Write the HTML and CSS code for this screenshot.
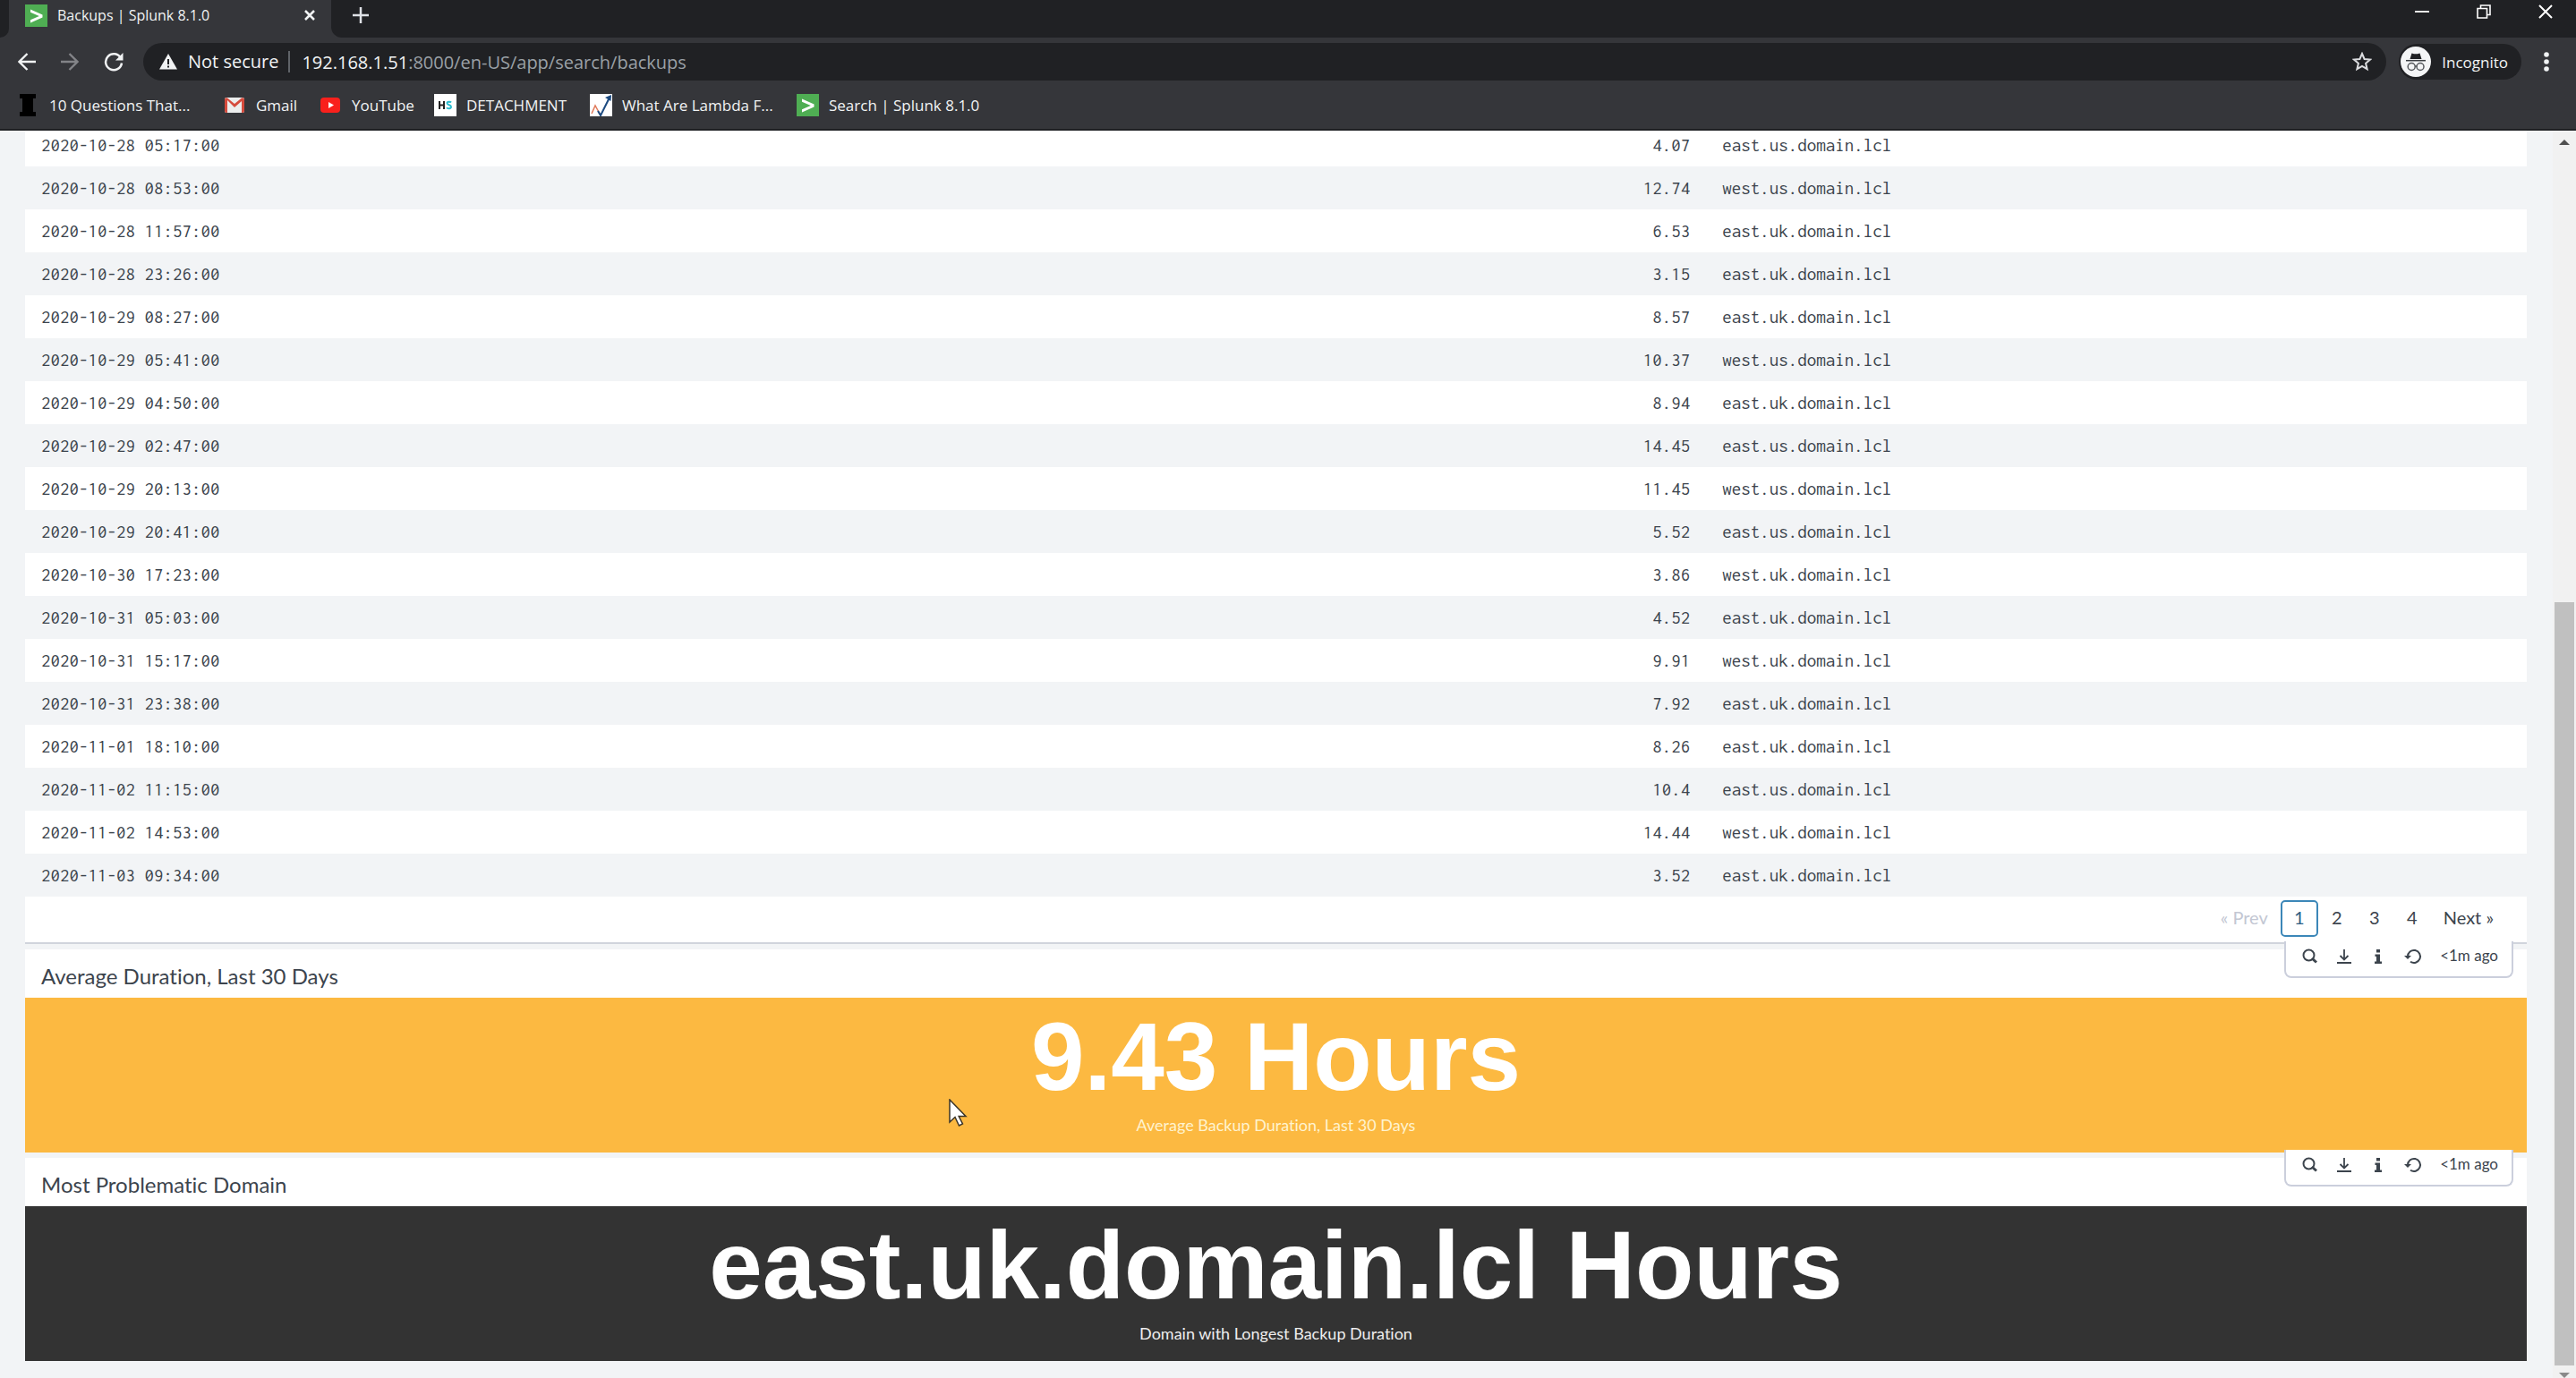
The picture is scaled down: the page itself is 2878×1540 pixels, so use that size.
FILE: index.html
```html
<!DOCTYPE html>
<html lang="en">
<head>
<meta charset="utf-8">
<title>Backups | Splunk 8.1.0</title>
<link rel="stylesheet" href="styles.css">
</head>
<body>
<svg class="defs" aria-hidden="true">
  <symbol id="splunk" viewBox="0 0 25 25"><path fill="#4fae53" d="M0 0h25v25H0z"/><path fill="#fff" d="M6 5.500 19.500 11.500v3L6 20.500v-3.300l9.800-4.200L6 8.800z"/></symbol>
  <symbol id="search" viewBox="0 0 18 18"><circle cx="7.500" cy="7.500" r="6" fill="none" stroke="currentColor" stroke-width="2"/><path d="m11 11 5 4.500" fill="none" stroke="currentColor" stroke-width="3"/></symbol>
  <symbol id="download" viewBox="0 0 18 18"><path d="M9 1v11M4.500 8 9 12.500 13.500 8M1 16h16" fill="none" stroke="currentColor" stroke-width="1.800"/></symbol>
  <symbol id="info" viewBox="0 0 18 18"><path fill="currentColor" d="M7 1h4v3.500H7zM5.500 6.500H11v8h2V17H5v-2.500h2V9H5.500z"/></symbol>
  <symbol id="refresh" viewBox="0 0 20 18"><path d="M4 9a7 7 0 1 1 3 5.700" fill="none" stroke="currentColor" stroke-width="2"/><path d="M0 8h8L4 12z" fill="currentColor"/></symbol>
</svg>

<header class="browser">
  <div class="tabs">
    <div class="tab-edge"></div>
    <div class="tab">
      <svg class="favicon"><use href="#splunk"/></svg>
      <span class="tab-title">Backups | Splunk 8.1.0</span>
      <button class="plain" aria-label="Close tab"><svg width="14" height="14" viewBox="0 0 14 14"><path d="m2 2 10 10M12 2 2 12" stroke="#f1f3f4" stroke-width="2.500"/></svg></button>
    </div>
    <div class="strip">
      <button class="plain" aria-label="New tab"><svg width="18" height="18" viewBox="0 0 18 18"><path d="M9 0v18M0 9h18" stroke="#dee1e6" stroke-width="2.500"/></svg></button>
      <div class="window-controls">
        <button class="plain" aria-label="Minimize"><svg width="16" height="16" viewBox="0 0 16 16"><path d="M0 8h16" stroke="#e8e8e8" stroke-width="2"/></svg></button>
        <button class="plain" aria-label="Restore"><svg width="16" height="16" viewBox="0 0 16 16"><path d="M1 4.500h10.500V15H1zM4.500 4.500V1H15v10.500h-3.500" fill="none" stroke="#fff" stroke-width="1.600"/></svg></button>
        <button class="plain" aria-label="Close"><svg width="16" height="16" viewBox="0 0 16 16"><path d="m1 1 14 14M15 1 1 15" stroke="#fff" stroke-width="2"/></svg></button>
      </div>
    </div>
  </div>

  <div class="toolbar">
    <div class="nav">
      <button class="plain" aria-label="Back"><svg width="20" height="20" viewBox="0 0 20 20"><path d="M20 10H2M10.500 1 1.500 10l9 9" fill="none" stroke="#f1f3f4" stroke-width="2.300"/></svg></button>
      <button class="plain" aria-label="Forward"><svg width="20" height="20" viewBox="0 0 20 20"><path d="M0 10h18M9.500 1l9 9-9 9" fill="none" stroke="#838488" stroke-width="2.300"/></svg></button>
      <button class="plain" aria-label="Reload"><svg width="22" height="22" viewBox="0 0 22 22"><path d="M19 7A9 9 0 1 0 20 12.500" fill="none" stroke="#f1f3f4" stroke-width="2.500"/><path d="M21.500 1v8.500H13z" fill="#f1f3f4"/></svg></button>
    </div>
    <div class="omnibox">
      <svg width="20" height="18" viewBox="0 0 20 18"><path d="M10 0 20 17.500H0z" fill="#f1f3f4"/><path d="M10 6v6M10 13.500v2" stroke="#202124" stroke-width="2"/></svg>
      <span class="secure">Not secure</span>
      <span class="url"><b>192.168.1.51</b>:8000/en-US/app/search/backups</span>
      <button class="plain" aria-label="Bookmark this page"><svg width="22" height="22" viewBox="0 0 22 22"><path d="m11 2 2.600 6 6.400.6-4.900 4.200 1.500 6.400L11 15.800l-5.600 3.400 1.500-6.400L2 8.600 8.400 8z" fill="none" stroke="#dcdde0" stroke-width="2"/></svg></button>
    </div>
    <div class="incognito">
      <svg width="34" height="34" viewBox="0 0 34 34"><circle cx="17" cy="17" r="17" fill="#f4f5f6"/><path d="m12.500 7.500 2.500.8h4l2.500-.8 2 6.500h-13z" fill="#202124"/><path d="M6 15.700h22" stroke="#3c3f43" stroke-width="1.500"/><circle cx="12.200" cy="22.500" r="4" fill="none" stroke="#55585c" stroke-width="1.500"/><circle cx="22" cy="22.500" r="4" fill="none" stroke="#55585c" stroke-width="1.500"/><path d="M16 22h2.500" stroke="#55585c" stroke-width="1.500"/></svg>
      <span>Incognito</span>
    </div>
    <button class="plain" aria-label="Menu"><svg width="6" height="22" viewBox="0 0 6 22"><g fill="#f1f3f4"><circle cx="3" cy="3" r="2.800"/><circle cx="3" cy="11" r="2.800"/><circle cx="3" cy="19" r="2.800"/></g></svg></button>
  </div>

  <nav class="bookmarks">
    <a href="#"><svg class="favicon" viewBox="0 0 25 25"><path fill="#000" d="M3 0h18v5h-3v15h3v5H3v-5h3V5H3z"/></svg>10 Questions That...</a>
    <a href="#"><svg class="favicon" viewBox="0 0 25 25"><rect x="1" y="4" width="22" height="17" rx="2" fill="#eceded"/><path d="M4 7v14H3a2 2 0 0 1-2-2V6a2 2 0 0 1 3-1.500l8 6.500 8-6.500A2 2 0 0 1 23 6v13a2 2 0 0 1-2 2h-1V8l-8 7z" fill="#d54b3d"/></svg>Gmail</a>
    <a href="#"><svg class="favicon" viewBox="0 0 25 25"><rect x="1" y="4" width="22" height="17" rx="4" fill="#f9201c"/><path d="m10 9 6 3.500-6 3.500z" fill="#fff"/></svg>YouTube</a>
    <a href="#"><svg class="favicon" viewBox="0 0 25 25"><path fill="#fff" d="M0 0h25v25H0z"/><path d="M6 8v9M11 8v9M6 12.500h5" fill="none" stroke="#222" stroke-width="2"/><path d="M19 9.500c-1-1.200-4.500-1.200-4.500.8 0 2.500 4.500 1.500 4.500 4.200 0 2-4 2.200-5 .7" fill="none" stroke="#2bbdd0" stroke-width="2"/></svg>DETACHMENT</a>
    <a href="#"><svg class="favicon" viewBox="0 0 25 25"><path fill="#fff" d="M0 0h25v25H0z"/><path d="m2 22 4-9 6 11" fill="none" stroke="#e0795a" stroke-width="1.500"/><path d="m9 19 3 5 10-20" fill="none" stroke="#1c4a80" stroke-width="2"/><path d="m17 4 7-3-.5 7z" fill="#1c4a80"/></svg>What Are Lambda F...</a>
    <a href="#"><svg class="favicon"><use href="#splunk"/></svg>Search | Splunk 8.1.0</a>
  </nav>
</header>

<div class="viewport">
  <main class="dashboard">
    <section class="panel">
      <table class="events">
        <colgroup><col class="time"><col class="hours"><col class="domain"></colgroup>
        <tbody>
          <tr><td>2020-10-28 05:17:00</td><td>4.07</td><td>east.us.domain.lcl</td></tr>
          <tr><td>2020-10-28 08:53:00</td><td>12.74</td><td>west.us.domain.lcl</td></tr>
          <tr><td>2020-10-28 11:57:00</td><td>6.53</td><td>east.uk.domain.lcl</td></tr>
          <tr><td>2020-10-28 23:26:00</td><td>3.15</td><td>east.uk.domain.lcl</td></tr>
          <tr><td>2020-10-29 08:27:00</td><td>8.57</td><td>east.uk.domain.lcl</td></tr>
          <tr><td>2020-10-29 05:41:00</td><td>10.37</td><td>west.us.domain.lcl</td></tr>
          <tr><td>2020-10-29 04:50:00</td><td>8.94</td><td>east.uk.domain.lcl</td></tr>
          <tr><td>2020-10-29 02:47:00</td><td>14.45</td><td>east.us.domain.lcl</td></tr>
          <tr><td>2020-10-29 20:13:00</td><td>11.45</td><td>west.us.domain.lcl</td></tr>
          <tr><td>2020-10-29 20:41:00</td><td>5.52</td><td>east.us.domain.lcl</td></tr>
          <tr><td>2020-10-30 17:23:00</td><td>3.86</td><td>west.uk.domain.lcl</td></tr>
          <tr><td>2020-10-31 05:03:00</td><td>4.52</td><td>east.uk.domain.lcl</td></tr>
          <tr><td>2020-10-31 15:17:00</td><td>9.91</td><td>west.uk.domain.lcl</td></tr>
          <tr><td>2020-10-31 23:38:00</td><td>7.92</td><td>east.uk.domain.lcl</td></tr>
          <tr><td>2020-11-01 18:10:00</td><td>8.26</td><td>east.uk.domain.lcl</td></tr>
          <tr><td>2020-11-02 11:15:00</td><td>10.4</td><td>east.us.domain.lcl</td></tr>
          <tr><td>2020-11-02 14:53:00</td><td>14.44</td><td>west.uk.domain.lcl</td></tr>
          <tr><td>2020-11-03 09:34:00</td><td>3.52</td><td>east.uk.domain.lcl</td></tr>
        </tbody>
      </table>
      <nav class="pages" aria-label="Pages">
        <a class="off" href="#">« Prev</a>
        <a class="current" href="#">1</a>
        <a href="#">2</a>
        <a href="#">3</a>
        <a href="#">4</a>
        <a href="#">Next »</a>
      </nav>
    </section>

    <section class="panel">
      <h3>Average Duration, Last 30 Days</h3>
      <div class="panel-menu">
        <button class="plain" aria-label="Open in Search"><svg width="18" height="18"><use href="#search"/></svg></button>
        <button class="plain" aria-label="Export"><svg width="18" height="18"><use href="#download"/></svg></button>
        <button class="plain" aria-label="Inspect"><svg width="18" height="18"><use href="#info"/></svg></button>
        <button class="plain" aria-label="Refresh"><svg width="20" height="18"><use href="#refresh"/></svg></button>
        <span>&lt;1m ago</span>
      </div>
      <div class="single amber">
        <div class="value">9.43 Hours</div>
        <div class="caption">Average Backup Duration, Last 30 Days</div>
      </div>
    </section>

    <section class="panel">
      <h3>Most Problematic Domain</h3>
      <div class="panel-menu">
        <button class="plain" aria-label="Open in Search"><svg width="18" height="18"><use href="#search"/></svg></button>
        <button class="plain" aria-label="Export"><svg width="18" height="18"><use href="#download"/></svg></button>
        <button class="plain" aria-label="Inspect"><svg width="18" height="18"><use href="#info"/></svg></button>
        <button class="plain" aria-label="Refresh"><svg width="20" height="18"><use href="#refresh"/></svg></button>
        <span>&lt;1m ago</span>
      </div>
      <div class="single dark">
        <div class="value">east.uk.domain.lcl Hours</div>
        <div class="caption">Domain with Longest Backup Duration</div>
      </div>
    </section>
  </main>
  <div class="scrollbar">
    <svg width="12" height="6" viewBox="0 0 12 6"><path d="M0 6 6 0l6 6z" fill="#505050"/></svg>
    <div class="track"><div class="thumb"></div></div>
    <svg width="12" height="6" viewBox="0 0 12 6"><path d="m0 0 6 6 6-6z" fill="#8a8a8a"/></svg>
  </div>
</div>

<svg class="cursor" width="22" height="32" viewBox="0 0 22 32"><path d="M1 1v25l6-5.500L11.500 30l4-2-4.300-8.500H19z" fill="#fff" stroke="#3a3428" stroke-width="1.500"/></svg>
</body>
</html>
```
FILE: styles.css
```css
* { box-sizing: border-box; }

body {
  margin: 0;
  height: 100vh;
  display: flex;
  flex-direction: column;
  overflow: hidden;
  background: #f2f4f6;
  color: #3c444d;
  font-family: Lato, "Open Sans", sans-serif;
  font-variant-ligatures: none;
}

a { color: inherit; text-decoration: none; }
svg { display: block; flex: none; }
.defs { position: absolute; width: 0; height: 0; }
.plain { border: 0; padding: 0; background: none; color: inherit; display: block; }

/* Browser chrome */
.browser {
  flex: none;
  background: #35363a;
  border-bottom: 2px solid #202124;
  color: #f1f3f4;
  font: 17px "Open Sans", "Noto Sans", sans-serif;
}
.favicon { width: 25px; height: 25px; }

.tabs { display: flex; height: 42px; background: #35363a; }
.tab-edge { width: 10px; background: #202124; border-bottom-right-radius: 12px; }
.tab {
  width: 360px;
  padding: 0 17px 8px 18px;
  display: flex;
  align-items: center;
  gap: 11px;
  font-size: 16px;
}
.tab-title { flex: 1; }
.strip {
  flex: 1;
  padding: 0 26px 8px 24px;
  display: flex;
  justify-content: space-between;
  align-items: center;
  background: #202124;
  border-bottom-left-radius: 12px;
}
.window-controls { display: flex; gap: 53px; padding-bottom: 8px; }

.toolbar {
  height: 54px;
  padding: 0 30px 0 20px;
  display: flex;
  align-items: center;
}
.nav { display: flex; align-items: center; gap: 28px; width: 140px; }
.omnibox {
  flex: 1;
  height: 42px;
  padding: 0 16px 0 18px;
  display: flex;
  align-items: center;
  border-radius: 21px;
  background: #202124;
  font-size: 20px;
}
.secure {
  margin: 0 13px 0 12px;
  padding-right: 11px;
  line-height: 24px;
  border-right: 2px solid #5f6368;
}
.url { flex: 1; color: #9aa0a6; }
.url b { font-weight: 400; color: #f1f3f4; }
.incognito {
  height: 40px;
  margin: 0 25px 0 14px;
  padding: 0 15px 0 2px;
  display: flex;
  align-items: center;
  gap: 12px;
  border-radius: 20px;
  background: #202124;
}

.bookmarks {
  height: 48px;
  padding: 0 19px 6px;
  display: grid;
  grid-template-columns: 231px 107px 128px 174px 231px auto;
  justify-content: start;
  align-items: center;
}
.bookmarks a { display: flex; align-items: center; gap: 11px; white-space: nowrap; }

/* Page, scrolled down */
.viewport { flex: 1; min-height: 0; display: flex; overflow: hidden; }
.dashboard { flex: 1; margin-top: -8px; padding: 0 29px 0 28px; }
.panel { position: relative; margin-bottom: 6px; background: #fff; }

.events {
  width: 100%;
  border-collapse: collapse;
  table-layout: fixed;
  font: 21px/24px Inconsolata, "DejaVu Sans Mono", monospace;
}
.time { width: 34%; }
.domain { width: 32.8%; }
.events td { height: 48px; padding: 0 18px; }
.events td:nth-child(2) { text-align: right; }
.events tr:nth-child(even) { background: #f2f4f6; }

.pages {
  height: 53px;
  padding: 4px 23px 0;
  display: flex;
  justify-content: flex-end;
  border-bottom: 2px solid #d0d4dc;
  font-size: 20px;
}
.pages a {
  height: 41px;
  min-width: 42px;
  padding: 0 14px;
  line-height: 38px;
  text-align: center;
}
.pages .off { color: #c3c7d3; }
.pages .current {
  padding: 0 13px;
  line-height: 34px;
  border: 2px solid #3c87b8;
  border-radius: 5px;
  color: #2f5f86;
}

h3 {
  margin: 0;
  padding: 0 18px;
  font-size: 24px;
  font-weight: 400;
  line-height: 60px;
  height: 54px;
}

.panel-menu {
  position: absolute;
  top: -9px;
  right: 15px;
  height: 41px;
  padding: 0 15px 6px 18px;
  display: flex;
  align-items: center;
  gap: 20px;
  background: #fff;
  border: 2px solid #cbcfdc;
  border-top: 0;
  border-radius: 0 0 8px 8px;
  font-size: 17px;
}
.panel-menu span { padding-bottom: 2px; }

.single {
  height: 173px;
  display: flex;
  flex-direction: column;
  align-items: center;
  color: #fff;
}
.amber { background: #fcb941; }
.dark { background: #333; }
.value {
  font: 700 107px/128px "Liberation Sans", Arial, sans-serif;
  padding-top: 2px;
  white-space: nowrap;
}
.caption { font-size: 18px; line-height: 24px; }
.amber .caption { color: #fff3cf; }
.dark .caption { color: #eee; }

.scrollbar {
  width: 26px;
  padding: 10px 0 0;
  display: flex;
  flex-direction: column;
  align-items: center;
  background: #f1f1f1;
}
.track {
  flex: 1;
  width: 22px;
  margin: 8px 0;
  display: flex;
  flex-direction: column;
  justify-content: flex-end;
}
.thumb { height: 62.9%; background: #c0c0c0; }

.cursor { position: absolute; left: 1060px; top: 1228px; }
```
